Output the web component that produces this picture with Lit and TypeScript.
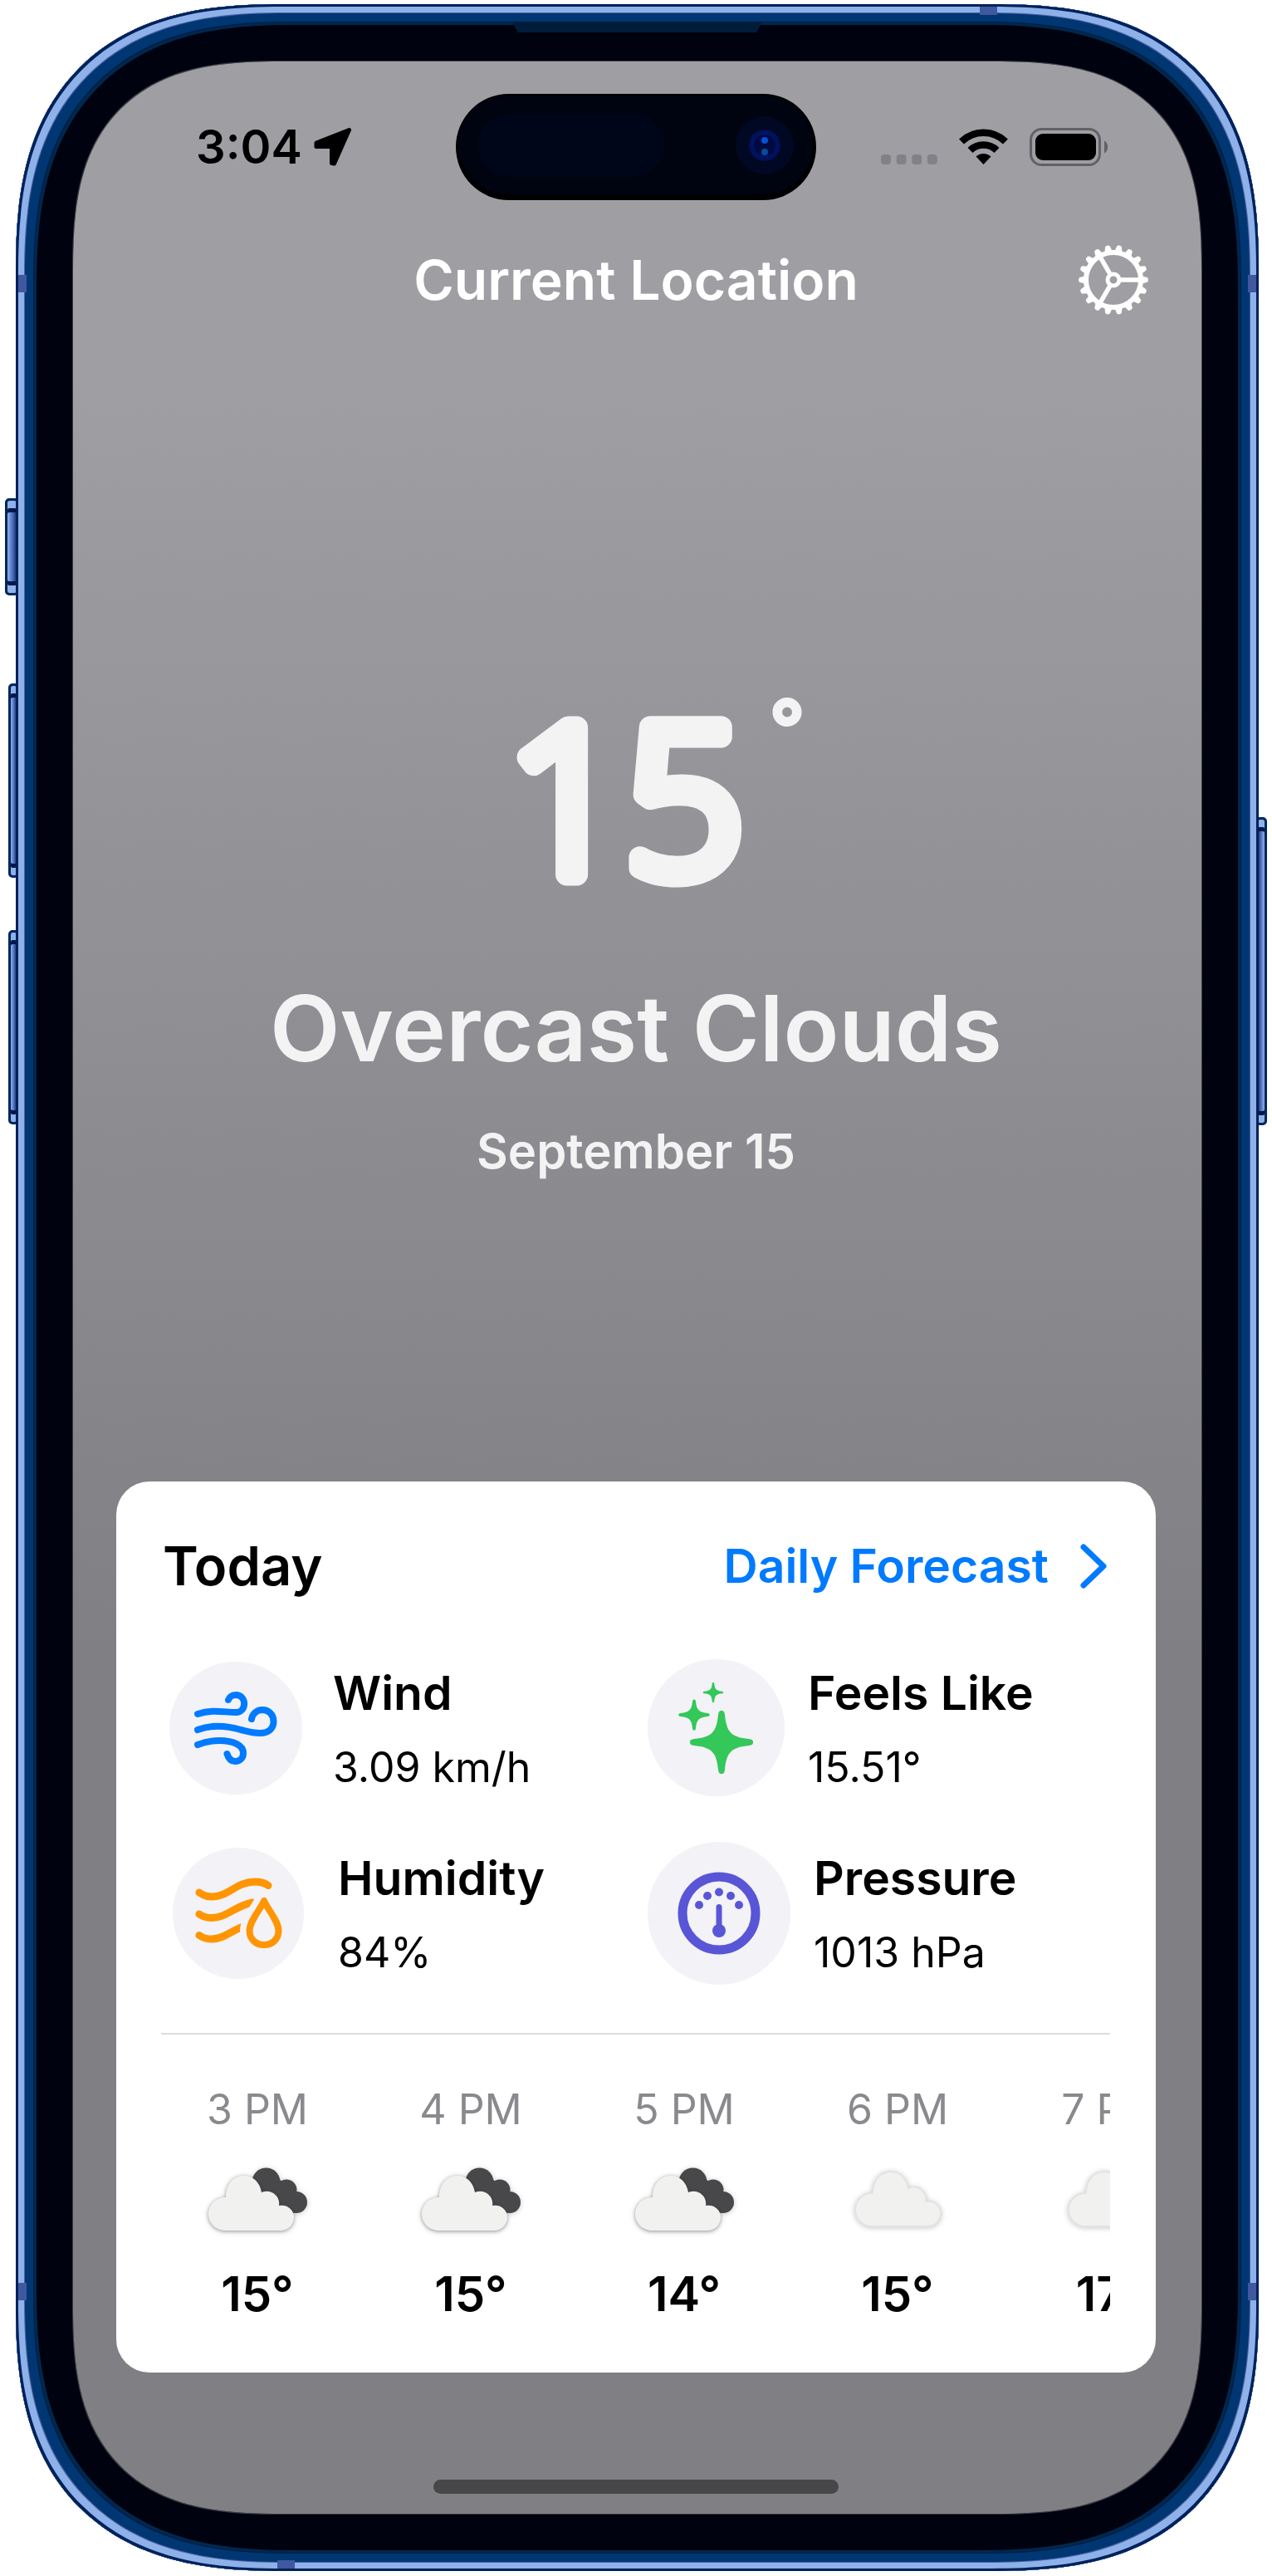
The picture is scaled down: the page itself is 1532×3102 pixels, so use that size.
import { LitElement, html, css, svg } from "lit";
import { customElement } from "lit/decorators.js";

const CLOUD =
  "M20 76 A20 20 0 0 1 22 36 C22 20 31 10 44 10 C55 10 63 18 65 30 C77 25 88 35 86 46 C96 44 104 51 104 60 C104 69 97 76 88 76Z";
const STAR =
  "M0 -38 C3 -38 3.5 -36 4 -33 C6 -12 12 -6 33 -4 C36 -3.5 38 -3 38 0 C38 3 36 3.5 33 4 C12 6 6 12 4 33 C3.5 36 3 38 0 38 C-3 38 -3.5 36 -4 33 C-6 12 -12 6 -33 4 C-36 3.5 -38 3 -38 0 C-38 -3 -36 -3.5 -33 -4 C-12 -6 -6 -12 -4 -33 C-3.5 -36 -3 -38 0 -38Z";

const icons = {
  wind: html`<svg width="100" height="88" viewBox="0 0 100 88" fill="none" stroke="#007aff" stroke-width="8" stroke-linecap="round" aria-hidden="true">
    <path d="M4 27 C22 21 36 25 50 25 C64 25 63 4 50 4 C45 4 42 7 41 10" />
    <path d="M4 46 C20 40 36 40 56 46 C64 48 71 50 79 50 C90 50 95.5 44 95.5 36 C95.5 28 90 22 82 22 C75 22 70 27 69 33" />
    <path d="M4 64 C14 60 24 59 30 59 C48 59 59 65 59 74 C59 80 55 84 49 84 C44 84 41 80 39.5 75" />
  </svg>`,
  humidity: html`<svg width="105" height="86" viewBox="0 0 105 86" fill="none" stroke="#ff9500" stroke-width="9" stroke-linecap="round" aria-hidden="true">
    <path d="M5 44 C9 47 14 48.5 20 48.5 C38 48.5 48 34 69 30" />
    <path d="M5 69.5 C9 72.5 14 74 20 74 C33 74 42 65 58 59" />
    <path d="M83 28 C79 38 65.5 52 65.5 64 C65.5 74 73 81 83 81 C93 81 100.5 74 100.5 64 C100.5 52 87 38 83 28Z" stroke="#f2f2f7" stroke-width="23" fill="#f2f2f7" />
    <path d="M5 18 C9 21 14 23 20 23 C40 23 50 5 72 5 C78 5 84 6.5 88 9.5" />
    <path d="M83 28 C79 38 65.5 52 65.5 64 C65.5 74 73 81 83 81 C93 81 100.5 74 100.5 64 C100.5 52 87 38 83 28Z" stroke-width="8" stroke-linejoin="round" />
  </svg>`,
  feels: html`<svg width="91" height="110" viewBox="0 0 91 110" fill="#34c759" aria-hidden="true">
    <path d=${STAR} transform="translate(52 72)" />
    <path d=${STAR} transform="translate(19 39) scale(.49)" />
    <path d=${STAR} transform="translate(42 12) scale(.32)" />
  </svg>`,
  pressure: html`<svg width="100" height="100" viewBox="0 0 100 100" fill="#5856d6" aria-hidden="true">
    <circle cx="50" cy="50" r="44" fill="none" stroke="#5856d6" stroke-width="11" />
    <circle cx="26" cy="40" r="5" /><circle cx="36" cy="29" r="5" /><circle cx="50" cy="24.5" r="5" />
    <circle cx="64" cy="29" r="5" /><circle cx="74" cy="40" r="5" />
    <rect x="46.5" y="39" width="7" height="32" rx="3.5" /><circle cx="50" cy="71" r="8" />
  </svg>`,
};

const cloudIcon = html`<svg class="sky" width="106" height="86" viewBox="0 0 106 86" aria-hidden="true">
  <path d=${CLOUD} fill="#f1f1f0" stroke="#e3e3e5" stroke-width="2" transform="translate(1 -1)" />
</svg>`;

const cloudsIcon = html`<svg class="sky" width="120" height="78" viewBox="0 0 120 78" aria-hidden="true">
  <g fill="#48484a">
    <circle cx="70.5" cy="17.5" r="17" /><circle cx="95" cy="27" r="12.5" /><circle cx="107" cy="42" r="13" />
    <path d="M60 30 L86 14 L106 30 L107 55 L84 52Z" />
  </g>
  <path class="front" d=${CLOUD} fill="#f1f1f0" />
</svg>`;

const metrics = [
  { key: "wind", label: "Wind", value: "3.09 km/h" },
  { key: "feels", label: "Feels Like", value: "15.51°" },
  { key: "humidity", label: "Humidity", value: "84%" },
  { key: "pressure", label: "Pressure", value: "1013 hPa" },
] as const;

const hours = [
  { time: "3 PM", icon: cloudsIcon, temp: "15°" },
  { time: "4 PM", icon: cloudsIcon, temp: "15°" },
  { time: "5 PM", icon: cloudsIcon, temp: "14°" },
  { time: "6 PM", icon: cloudIcon, temp: "15°" },
  { time: "7 PM", icon: cloudIcon, temp: "17°" },
];

const teeth = Array.from({ length: 18 }, (_, i) => i * 20);

@customElement("app-root")
export class AppRoot extends LitElement {
  static styles = css`
    :host {
      display: block;
      padding: 5px 16px 6px 19px;
      background: #fff;
      font-family: Inter, "Liberation Sans", sans-serif;
      color: #000;
    }
    * { box-sizing: border-box; margin: 0; padding: 0; }
    svg { display: block; flex: none; }

    .phone {
      position: relative;
      padding: 69px;
    }
    .body {
      position: absolute;
      inset: 0;
      border-radius: 262px;
      background: #000210;
      box-shadow:
        inset 0 0 0 3px #00215a,
        inset 0 0 0 10px #8eb1ea,
        inset 0 0 0 11px #4f62a4,
        inset 0 0 0 21px #003772,
        inset 0 0 0 22px #001c48,
        inset 0 0 0 25px #00284c;
    }
    .key {
      position: absolute;
      background: linear-gradient(90deg, #8eb1ea, #5374c0 50%, #14306f);
      border: 3px solid #00265c;
      border-radius: 5px;
      box-shadow: inset 0 9px 0 #8eb1ea, inset 0 -9px 0 #8eb1ea, inset 0 14px 0 #00184c, inset 0 -14px 0 #00184c;
    }
    .action { left: -13px; top: 595px; width: 17px; height: 117px; }
    .volume-up { left: -9px; top: 818px; width: 13px; height: 234px; }
    .volume-down { left: -9px; top: 1115px; width: 13px; height: 234px; }
    .power { right: -10px; top: 979px; width: 14px; height: 371px; transform: scaleX(-1); }
    .band { position: absolute; background: #3f58a0; }
    .band.side { width: 10px; height: 21px; }
    .band.flat { width: 21px; height: 10px; }
    .left { left: 3px; }
    .right { right: 3px; }
    .upper { top: 326px; }
    .lower { bottom: 326px; }
    .band-top { top: 3px; right: 315px; }
    .band-bottom { bottom: 3px; left: 315px; }
    .speaker {
      position: absolute;
      top: 22px;
      left: 50%;
      width: 300px;
      height: 12px;
      margin-left: -150px;
      background: #001c3a;
      clip-path: polygon(0 0, 100% 0, 98% 100%, 2% 100%);
    }

    .screen {
      position: relative;
      display: flex;
      flex-direction: column;
      padding: 39px 3px 24px 0;
      border-radius: 193px;
      background: linear-gradient(#9f9ea3 13%, #807f84 65%);
      box-shadow: 0 0 0 1px #3a3a44;
    }
    @supports (corner-shape: superellipse(1.3)) {
      .body { border-radius: 320px; corner-shape: superellipse(1.34); }
      .screen { border-radius: 251px; corner-shape: superellipse(1.42); }
    }

    .status {
      display: grid;
      grid-template-columns: 1fr 434px 1fr;
      align-items: center;
    }
    .clock {
      display: flex;
      align-items: center;
      gap: 14px;
      padding-left: 148px;
      font-size: 56px;
      line-height: 64px;
      font-weight: 600;
    }
    .signals {
      display: flex;
      align-items: center;
      justify-content: flex-end;
      gap: 26px;
      padding-right: 109px;
    }

    .bar {
      display: grid;
      grid-template-columns: 146px 1fr 146px;
      align-items: center;
      margin-top: 53px;
      color: #fff;
    }
    .title {
      grid-column: 2;
      text-align: center;
      font-size: 66px;
      line-height: 86px;
      font-weight: 600;
      white-space: nowrap;
    }
    .gear {
      width: 86px;
      height: 86px;
      border: 0;
      background: none;
      color: inherit;
      cursor: pointer;
    }

    .hero {
      display: flex;
      flex-direction: column;
      align-items: center;
      padding: 450px 0 358px;
      color: #f3f3f4;
      font-weight: 600;
      text-align: center;
    }
    .degrees { overflow: visible; }
    .figure { font-family: "Open Sans", "Noto Sans", sans-serif; font-weight: 300; }
    .ring { font-weight: 200; }
    .condition { margin-top: 88px; font-size: 110px; line-height: 140px; font-weight: 600; }
    .date { margin-top: 38px; font-size: 58px; line-height: 80px; font-weight: 600; }

    .card {
      margin: 0 52px;
      padding: 60px 55px 61px 54px;
      border-radius: 40px;
      background: #fff;
    }
    .head {
      display: flex;
      align-items: center;
      justify-content: space-between;
      line-height: 84px;
    }
    .today { font-size: 65px; font-weight: 600; padding-left: 2px; }
    .more {
      display: flex;
      align-items: center;
      gap: 38px;
      font-size: 57px;
      font-weight: 600;
      color: #007aff;
      text-decoration: none;
    }
    .metrics {
      display: grid;
      grid-template-columns: 586px 1fr;
      row-gap: 52px;
      margin-top: 67px;
    }
    .metric { display: flex; align-items: center; height: 171px; gap: 28px; }
    .wind { padding-left: 10px; gap: 37px; }
    .humidity { padding-left: 14px; gap: 41px; }
    .disc {
      display: grid;
      place-items: center;
      flex: none;
      width: 160px;
      aspect-ratio: 1;
      border-radius: 50%;
      background: #f2f2f7;
    }
    .humidity .disc { width: 158px; }
    .feels .disc { width: 165px; }
    .pressure .disc { width: 172px; }
    .facts { display: flex; flex-direction: column; gap: 24px; white-space: nowrap; }
    .facts dt { font-size: 57px; line-height: 70px; font-weight: 600; }
    .facts dd { font-size: 50px; line-height: 60px; }

    .hours {
      display: flex;
      gap: 137px;
      margin-top: 59px;
      padding: 60px 0 0 56px;
      border-top: 2px solid #dcdcdf;
      overflow: hidden;
      list-style: none;
    }
    .hour {
      display: flex;
      flex-direction: column;
      align-items: center;
      flex: none;
      width: 120px;
      white-space: nowrap;
    }
    .time { font-size: 50px; line-height: 60px; color: #8a8a8e; }
    .sky { overflow: visible; filter: drop-shadow(0 1px 3px rgba(0, 0, 0, 0.22)); }
    .front { filter: drop-shadow(0 1px 2px rgba(0, 0, 0, 0.25)); }
    .weather { display: grid; place-items: center; height: 158px; }
    .temp { font-size: 58px; line-height: 68px; font-weight: 600; }

    .home {
      align-self: center;
      width: 36%;
      height: 17px;
      margin-top: 129px;
      border-radius: 9px;
      background: #474749;
    }
  `;

  render() {
    return html`
      <div class="phone">
        <div class="key action"></div>
        <div class="key volume-up"></div>
        <div class="key volume-down"></div>
        <div class="key power"></div>
        <div class="body"></div>
        <div class="band side left upper"></div>
        <div class="band side right upper"></div>
        <div class="band side left lower"></div>
        <div class="band side right lower"></div>
        <div class="band flat band-top"></div>
        <div class="band flat band-bottom"></div>
        <div class="speaker"></div>
        <main class="screen">${this.status()} ${this.header()} ${this.hero()} ${this.card()}
          <div class="home"></div>
        </main>
      </div>
    `;
  }

  private status() {
    return html`<div class="status">
      <div class="clock">
        <time>3:04</time>
        <svg width="46" height="46" viewBox="0 0 46 46" aria-hidden="true">
          <path d="M42.5 2.5 L3 18 L3 22.5 L21.5 22.5 L21.5 42.5 L24.5 43Z" stroke="#000" stroke-width="5" stroke-linejoin="round" />
        </svg>
      </div>
      <svg width="434" height="128" viewBox="0 0 434 128" aria-hidden="true">
        <defs>
          <radialGradient id="lens"><stop offset="0" stop-color="#0026a8" /><stop offset=".6" stop-color="#001470" /><stop offset="1" stop-color="#001050" /></radialGradient>
        </defs>
        <rect width="434" height="128" rx="64" />
        <rect x="3" y="2" width="427" height="119" rx="60" fill="#000310" />
        <rect x="27" y="24" width="224" height="76" rx="38" fill="#000619" />
        <circle cx="372" cy="62" r="35" fill="#000823" />
        <circle cx="372" cy="62" r="19" fill="url(#lens)" />
        <rect x="359" y="50" width="26" height="24" rx="11" fill="#000a40" />
        <circle cx="372" cy="56" r="4" fill="#0052d8" />
        <circle cx="372" cy="70" r="4" fill="#0a4a9c" />
      </svg>
      <div class="signals">
        <svg width="68" height="44" viewBox="0 0 68 44" fill="#828187" aria-hidden="true">
          ${[0, 1, 2, 3].map((i) => svg`<rect x=${i * 18.6} y="31" width="12" height="12" rx="4" />`)}
        </svg>
        <svg width="59" height="44" viewBox="0 0 59 44" fill="none" stroke="#000" stroke-width="8.5" aria-hidden="true">
          <path d="M3 15.5 A38 38 0 0 1 56 15.5" />
          <path d="M13.500 26 A23 23 0 0 1 45.500 26" />
          <path d="M29.500 43 L20.500 33.500 A13 13 0 0 1 38.500 33.500Z" fill="#000" stroke="none" />
        </svg>
        <svg width="95" height="46" viewBox="0 0 95 46" aria-hidden="true">
          <rect x="1.500" y="1.500" width="83" height="43" rx="13" fill="none" stroke="#626165" stroke-width="3" />
          <rect x="7" y="7" width="73" height="32" rx="9" />
          <path d="M90 15.500 C95.500 18 95.500 28 90 30.500Z" fill="#626165" />
        </svg>
      </div>
    </div>`;
  }

  private header() {
    return html`<header class="bar">
      <h1 class="title">Current Location</h1>
      <button class="gear" type="button" aria-label="Settings">
        <svg width="86" height="86" viewBox="-43 -43 86 86" fill="currentColor" aria-hidden="true">
          ${teeth.map((a) => svg`<path d="M33 -5 L41 -2.800 Q43 0 41 2.800 L33 5Z" transform="rotate(${a})" />`)}
          <g fill="none" stroke="currentColor">
            <circle r="33" stroke-width="6" />
            <circle r="7" stroke-width="5" />
            <path d="M9 0 H32 M-4.500 -7.800 L-16 -27.700 M-4.500 7.800 L-16 27.700" stroke-width="5.500" />
          </g>
        </svg>
      </button>
    </header>`;
  }

  private hero() {
    return html`<section class="hero">
      <svg class="degrees" width="400" height="250" viewBox="0 0 400 250" fill="#f3f3f4" stroke="#f3f3f4" stroke-linejoin="round" stroke-linecap="round" role="img" aria-label="15 degrees">
        <text class="figure" x="46" y="223" font-size="248" stroke-width="27">15</text>
        <text class="ring" x="362" y="79" font-size="88" stroke-width="8">°</text>
      </svg>
      <p class="condition">Overcast Clouds</p>
      <p class="date">September 15</p>
    </section>`;
  }

  private card() {
    return html`<section class="card">
      <div class="head">
        <h2 class="today">Today</h2>
        <a class="more" href="#daily">Daily Forecast
          <svg width="36" height="54" viewBox="0 0 36 54" fill="none" stroke="#007aff" stroke-width="7" stroke-linecap="round" stroke-linejoin="round" aria-hidden="true">
            <path d="M4 4 L28 27 L4 50" />
          </svg>
        </a>
      </div>
      <div class="metrics">
        ${metrics.map(
          (m) => html`<div class="metric ${m.key}">
            <div class="disc">${icons[m.key]}</div>
            <dl class="facts"><dt>${m.label}</dt><dd>${m.value}</dd></dl>
          </div>`
        )}
      </div>
      <ol class="hours">
        ${hours.map(
          (h) => html`<li class="hour">
            <span class="time">${h.time}</span>
            <span class="weather">${h.icon}</span>
            <span class="temp">${h.temp}</span>
          </li>`
        )}
      </ol>
    </section>`;
  }
}
